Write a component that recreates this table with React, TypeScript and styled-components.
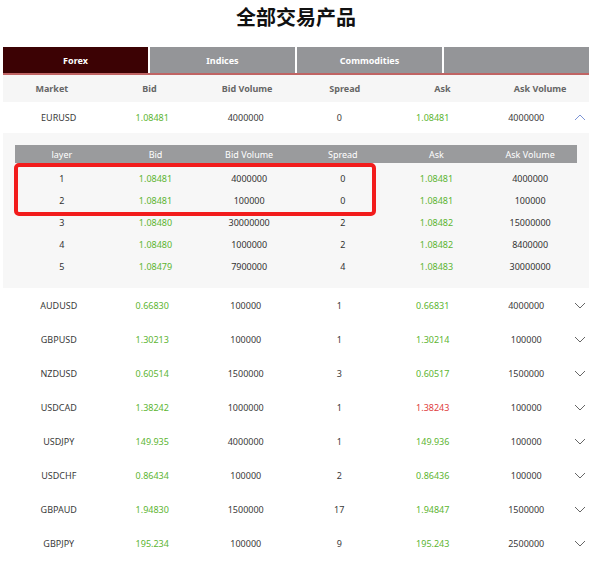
import React from "react";
import styled, { createGlobalStyle } from "styled-components";

const Global = createGlobalStyle`
  html, body { margin: 0; padding: 0; background: #fff; }
  body { font-family: "Noto Sans", "Open Sans", sans-serif; }
  * { box-sizing: border-box; }
`;

const Page = styled.div`
  width: 595px;
  padding: 0 6px 0 3px;
`;

const Title = styled.h1`
  margin: 0;
  height: 47px;
  padding-top: 3px;
  text-align: center;
  font-family: "Noto Sans CJK SC", "Noto Sans", sans-serif;
  font-weight: 700;
  font-size: 20px;
  line-height: 28px;
  color: #111;
`;

const Tabs = styled.div`
  display: flex;
  gap: 2px;
  border-bottom: 2px solid #c06464;
`;

const Tab = styled.div<{ $active?: boolean }>`
  flex: 1;
  height: 26px;
  display: flex;
  align-items: center;
  justify-content: center;
  background: ${(p) => (p.$active ? "#3c0204" : "#949598")};
  color: #fff;
  font-weight: 700;
  font-size: 9px;
`;

const HeaderRow = styled.div`
  display: grid;
  grid-template-columns: repeat(6, 1fr);
  height: 27px;
  align-items: center;
  background: #f6f6f6;
  color: #666;
  font-weight: 700;
  font-size: 9px;
  text-align: center;
`;

const Row = styled.div<{ $h: number }>`
  display: grid;
  grid-template-columns: repeat(6, 93.5px) 14px;
  padding-left: 9px;
  height: ${(p) => p.$h}px;
  align-items: center;
  font-size: 9px;
  color: #3a3a3a;
  text-align: center;
`;

const Cell = styled.div<{ $tone?: "up" | "down" }>`
  color: ${(p) =>
    p.$tone === "up" ? "#5cb531" : p.$tone === "down" ? "#e03c3c" : "inherit"};
`;

const ChevronCell = styled.div`
  display: flex;
  justify-content: center;
  align-items: center;
`;

const Panel = styled.div`
  position: relative;
  background: #f7f7f7;
  padding: 12px 12px 11px 12px;
`;

const SubHeader = styled.div`
  display: grid;
  grid-template-columns: repeat(6, 1fr);
  height: 18px;
  align-items: center;
  background: #9a9b9d;
  color: #fff;
  font-size: 9px;
  text-align: center;
  margin-bottom: 4px;
`;

const SubRow = styled.div`
  display: grid;
  grid-template-columns: repeat(6, 1fr);
  height: 22px;
  align-items: center;
  font-size: 9px;
  color: #333;
  text-align: center;
`;

const Highlight = styled.div`
  position: absolute;
  left: 11px;
  top: 30px;
  width: 362px;
  height: 53px;
  border: 4px solid #f21c1c;
  border-radius: 5px;
  pointer-events: none;
`;

const Chevron = ({ up }: { up?: boolean }) => (
  <svg width="12" height="7" viewBox="0 0 12 7">
    <polyline
      points={up ? "1,6 6,1 11,6" : "1,1 6,6 11,1"}
      fill="none"
      stroke={up ? "#7d95d6" : "#666"}
      strokeWidth="1"
    />
  </svg>
);

type Tone = "up" | "down";
type Quote = [string, string, string, string, string, string, Tone?];

const rows: Quote[] = [
  ["AUDUSD", "0.66830", "100000", "1", "0.66831", "4000000"],
  ["GBPUSD", "1.30213", "100000", "1", "1.30214", "100000"],
  ["NZDUSD", "0.60514", "1500000", "3", "0.60517", "1500000"],
  ["USDCAD", "1.38242", "1000000", "1", "1.38243", "100000", "down"],
  ["USDJPY", "149.935", "4000000", "1", "149.936", "100000"],
  ["USDCHF", "0.86434", "100000", "2", "0.86436", "100000"],
  ["GBPAUD", "1.94830", "1500000", "17", "1.94847", "1500000"],
  ["GBPJPY", "195.234", "100000", "9", "195.243", "2500000"],
];

const layers: string[][] = [
  ["1", "1.08481", "4000000", "0", "1.08481", "4000000"],
  ["2", "1.08481", "100000", "0", "1.08481", "100000"],
  ["3", "1.08480", "30000000", "2", "1.08482", "15000000"],
  ["4", "1.08480", "1000000", "2", "1.08482", "8400000"],
  ["5", "1.08479", "7900000", "4", "1.08483", "30000000"],
];

const cols = ["Market", "Bid", "Bid Volume", "Spread", "Ask", "Ask Volume"];

const QuoteRow = ({ q, h, open }: { q: Quote; h: number; open?: boolean }) => (
  <Row $h={h}>
    <Cell>{q[0]}</Cell>
    <Cell $tone="up">{q[1]}</Cell>
    <Cell>{q[2]}</Cell>
    <Cell>{q[3]}</Cell>
    <Cell $tone={q[6] ?? "up"}>{q[4]}</Cell>
    <Cell>{q[5]}</Cell>
    <ChevronCell>
      <Chevron up={open} />
    </ChevronCell>
  </Row>
);

export default function App() {
  return (
    <Page>
      <Global />
      <Title>全部交易产品</Title>
      <Tabs>
        <Tab $active>Forex</Tab>
        <Tab>Indices</Tab>
        <Tab>Commodities</Tab>
        <Tab />
      </Tabs>
      <HeaderRow>
        {cols.map((c) => (
          <div key={c}>{c}</div>
        ))}
      </HeaderRow>
      <QuoteRow
        q={["EURUSD", "1.08481", "4000000", "0", "1.08481", "4000000"]}
        h={31}
        open
      />
      <Panel>
        <SubHeader>
          {["layer", "Bid", "Bid Volume", "Spread", "Ask", "Ask Volume"].map((c) => (
            <div key={c}>{c}</div>
          ))}
        </SubHeader>
        {layers.map((l) => (
          <SubRow key={l[0]}>
            <Cell>{l[0]}</Cell>
            <Cell $tone="up">{l[1]}</Cell>
            <Cell>{l[2]}</Cell>
            <Cell>{l[3]}</Cell>
            <Cell $tone="up">{l[4]}</Cell>
            <Cell>{l[5]}</Cell>
          </SubRow>
        ))}
        <Highlight />
      </Panel>
      {rows.map((q) => (
        <QuoteRow key={q[0]} q={q} h={34} />
      ))}
    </Page>
  );
}
